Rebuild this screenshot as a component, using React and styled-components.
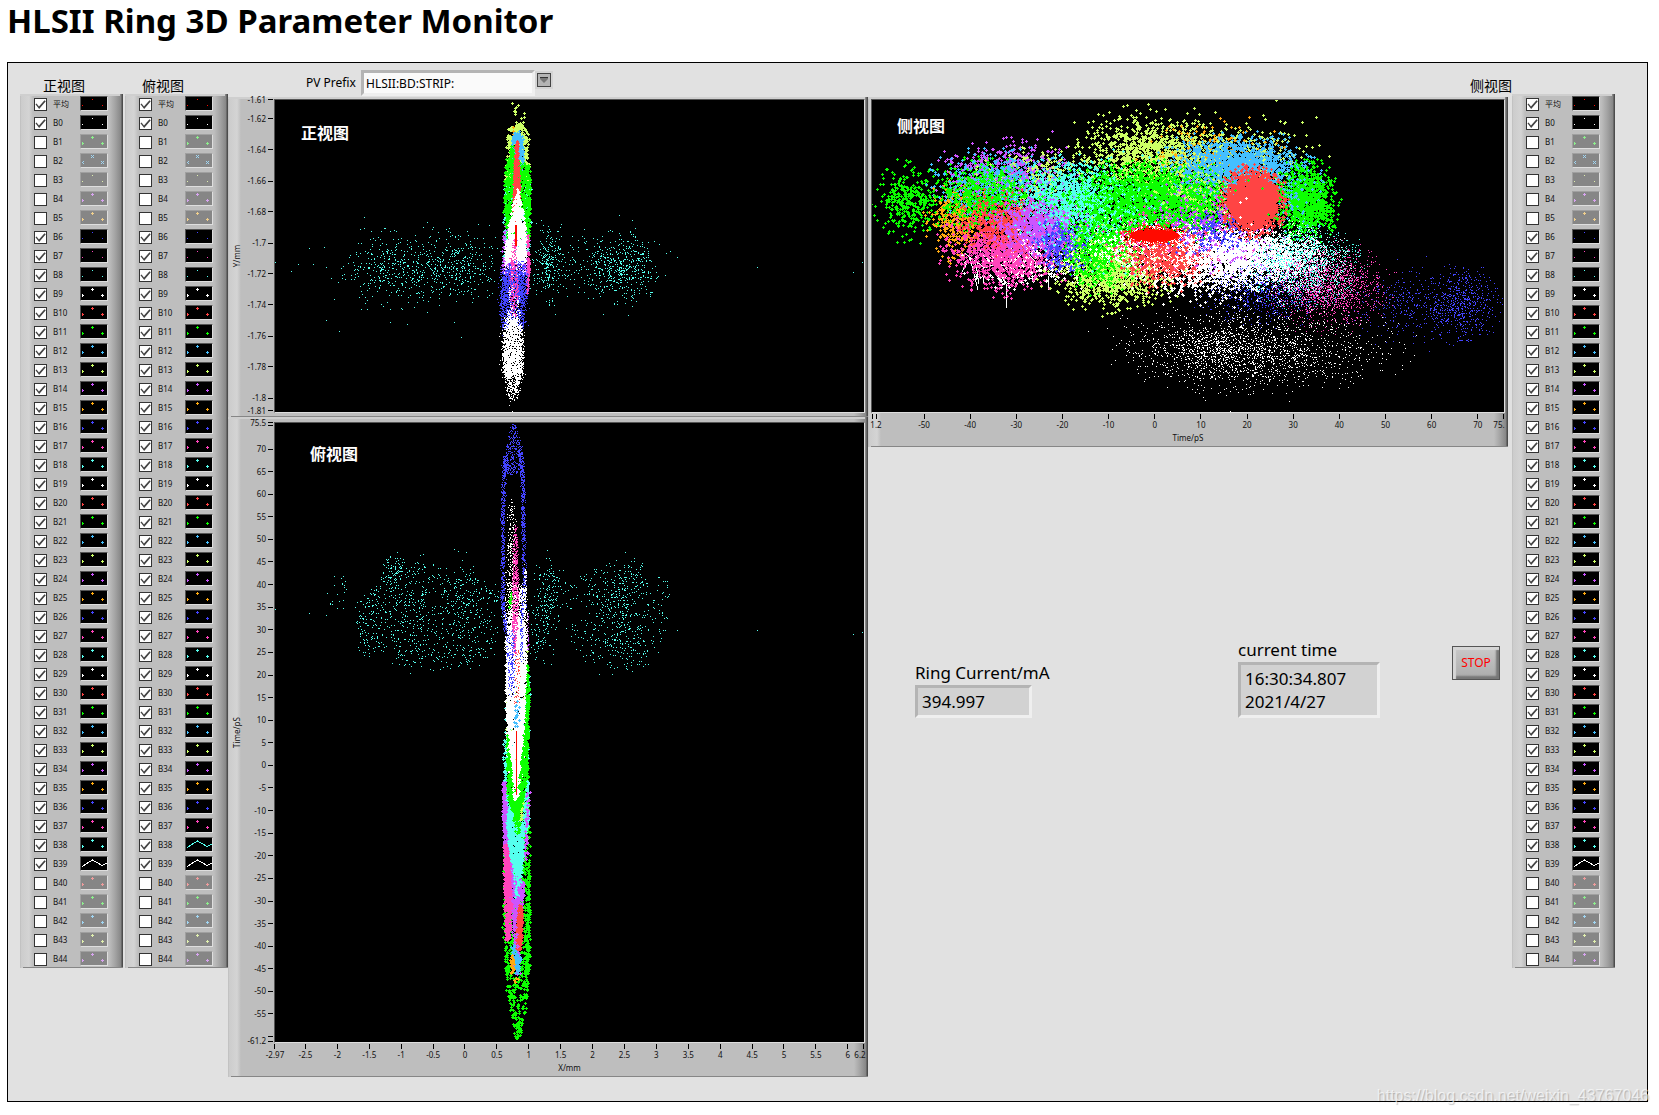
import React, { useId, useMemo } from "react";
import styled, { createGlobalStyle, css } from "styled-components";

const COLORS = {
  white: "#ffffff",
  red: "#ff4444",
  hot: "#ff0a00",
  green: "#0cff00",
  sky: "#44bfff",
  lime: "#ccff66",
  purple: "#cc55ff",
  orange: "#ffaa11",
  blue: "#4444ff",
  pink: "#ff44bb",
  cyan: "#55ffee",
};

const MUTED = {
  red: "#f09c9c",
  green: "#8cf08c",
  sky: "#a0d6f4",
  lime: "#e0f0ae",
  purple: "#d8a4f0",
  orange: "#f0cf8c",
};

const GlobalStyle = createGlobalStyle`
  *, *::before, *::after { box-sizing: border-box; }
  body {
    margin: 0;
    background: #ffffff;
    color: #000000;
    font-family: "Noto Sans", "Noto Sans CJK SC", sans-serif;
  }
`;

/* ---------- shared surfaces ---------- */

const raisedFrame = css`
  background:
    linear-gradient(#cfcfcf, #cfcfcf) top left / calc(100% - 3px) 2px no-repeat,
    linear-gradient(#868686, #868686) bottom right / calc(100% - 3px) 1px no-repeat,
    linear-gradient(
      to right,
      #b8b8b8 0,
      #cccccc 1px,
      #d4d4d4 9px,
      #bebebe 13px,
      #bebebe calc(100% - 14px),
      #a4a4a4 calc(100% - 8px),
      #868686 calc(100% - 2px),
      #4c4c4c calc(100% - 1px),
      #4c4c4c 100%
    );
`;

const sunken = css`
  border: 3px solid;
  border-color: #b4b4b4 #efefef #efefef #b4b4b4;
`;

/* ---------- page ---------- */

const Page = styled.div`
  position: relative;
  min-width: 1280px;
  padding: 0 11px 13px 7px;
`;

const Title = styled.h1`
  margin: 0;
  height: 62px;
  font-size: 33px;
  line-height: 42px;
  font-weight: 700;
`;

const FrontPanel = styled.main`
  display: flex;
  align-items: flex-start;
  padding: 0 32px 24px 12px;
  border: 1px solid #000000;
  background: #e1e1e1;
`;

const Graphs = styled.div`
  flex: 1;
  display: grid;
  grid-template-columns: minmax(0, 640fr) minmax(0, 644fr);
`;

const Column = styled.section`
  display: flex;
  flex-direction: column;
`;

const Watermark = styled.div`
  position: absolute;
  right: 10px;
  bottom: 9px;
  font: 16px/20px "Liberation Sans", Arial, sans-serif;
  color: rgba(255, 255, 255, 0.65);
  text-shadow: 1px 1px 1px rgba(0, 0, 0, 0.22);
`;

/* ---------- legends ---------- */

const LegendColumn = styled.section`
  width: 103px;
  margin-right: ${(p) => (p.$gap ? "2px" : "0")};
`;

const ViewName = styled.h2`
  margin: 0;
  height: 31px;
  padding: ${(p) => p.$pad || "0"};
  font-size: 14px;
  line-height: 46px;
  font-weight: 400;
`;

const LegendList = styled.ul`
  ${raisedFrame}
  margin: 0;
  padding: 0;
  list-style: none;
`;

const LegendRow = styled.label`
  display: grid;
  grid-template-columns: 13px 33px 28px;
  align-items: center;
  height: 19px;
  padding-left: 14px;
  font-size: 8px;
  line-height: 10px;
  color: #111111;
`;

const TickBox = styled.input.attrs({ type: "checkbox" })`
  appearance: none;
  width: 13px;
  height: 13px;
  margin: 2px 0 0;
  border: 1px solid #333333;
  background: #ffffff;

  &:checked::before {
    content: "";
    display: block;
    width: 11px;
    height: 11px;
    background: #444444;
    clip-path: polygon(4% 48%, 14% 42%, 36% 68%, 86% 12%, 98% 20%, 38% 90%);
  }
`;

const PlotName = styled.span`
  padding-left: 6px;
`;

const Swatch = styled.svg`
  display: block;
  width: 28px;
  height: 15px;
  border: 1px solid;
  border-color: ${(p) => (p.$on ? "#555555 #dedede #dedede #555555" : "#a0a0a0 #dedede #dedede #a0a0a0")};
  background: ${(p) => (p.$on ? "#000000" : "#868686")};
`;

/* ---------- controls ---------- */

const TopBar = styled.div`
  display: flex;
  align-items: flex-start;
  justify-content: ${(p) => (p.$end ? "flex-end" : "flex-start")};
  height: 34px;
  padding-left: 78px;
`;

const PrefixLabel = styled.label`
  width: 55px;
  font-size: 12px;
  line-height: 39px;
`;

const PrefixInput = styled.input`
  ${sunken}
  width: 174px;
  height: 26px;
  margin-top: 7px;
  padding: 0 2px;
  background: #fafafa;
  font: 12px/18px "Noto Sans", sans-serif;
  color: #000000;
`;

const DropButton = styled.button`
  display: flex;
  align-items: center;
  justify-content: center;
  width: 18px;
  height: 18px;
  margin-top: 8px;
  padding: 0;
  border: 2px solid #d4d4d4;
  background: #b4b4b4;

  svg {
    width: 14px;
    height: 14px;
    flex: none;
  }
`;

const Readouts = styled.div`
  display: grid;
  grid-template-columns: 323fr 214fr 48px;
  justify-items: start;
  margin: 191px 12px 0 47px;
`;

const Readout = styled.div`
  align-self: end;
  display: flex;
  flex-direction: column;
  font-size: 17px;
  line-height: 23px;

  label {
    line-height: 24px;
  }
`;

const ReadoutBox = styled.output`
  ${sunken}
  width: ${(p) => p.$width};
  padding: 2px 4px;
  background: #d2d2d2;
  white-space: pre-line;
`;

const StopButton = styled.button`
  align-self: start;
  width: 48px;
  height: 34px;
  margin-top: 8px;
  padding: 0;
  border: 1px solid #555555;
  background: linear-gradient(#c9c9c9, #ababab);
  box-shadow: inset 3px 3px 1px #d6d6d6, inset -3px -3px 2px #777777;
  font: 12px/18px "Noto Sans", sans-serif;
  color: #ff0000;
`;

/* ---------- graphs ---------- */

const GraphFrame = styled.figure`
  ${raisedFrame}
  display: grid;
  grid-template-columns: ${(p) => (p.$yAxis ? "46px" : "3px")} minmax(0, 1fr) 3px;
  grid-template-rows: ${(p) => (p.$stacked ? "5px" : "2px")} ${(p) => p.$plotHeight} ${(p) => (p.$xAxis ? "34px" : "4px")};
  margin: 0 ${(p) => (p.$xAxis && !p.$yAxis ? "4px" : "0")} 0 0;
`;

const PlotArea = styled.div`
  position: relative;
  grid-column: 2;
  grid-row: 2;
  border: 1px solid;
  border-color: #555555 #dedede #dedede #555555;
  background: #000000;
`;

const Cloud = styled.svg`
  display: block;
  width: 100%;
  height: 100%;
`;

const Caption = styled.figcaption`
  position: absolute;
  left: ${(p) => p.$left};
  top: ${(p) => p.$top};
  font-size: 16px;
  line-height: 20px;
  font-weight: 700;
  color: #ffffff;
`;

const AxisSvg = styled.svg`
  display: block;
  grid-column: ${(p) => (p.$side === "left" ? 1 : 2)};
  grid-row: ${(p) => (p.$side === "left" ? 2 : 3)};
  width: 100%;
  height: 100%;
  overflow: visible;
  font-size: 8px;
  fill: #111111;

  line {
    stroke: #000000;
    shape-rendering: crispEdges;
  }
`;

/* ---------- scatter generation ---------- */

function makeRandom(seed) {
  let s = seed;
  const next = () => {
    s = (s + 0x6d2b79f5) | 0;
    let t = Math.imul(s ^ (s >>> 15), 1 | s);
    t = (t + Math.imul(t ^ (t >>> 7), 61 | t)) ^ t;
    return ((t ^ (t >>> 14)) >>> 0) / 4294967296;
  };
  const normal = () =>
    Math.sqrt(-2 * Math.log(next() + 1e-9)) * Math.cos(2 * Math.PI * next());
  return { next, normal };
}

const dot = (x, y) => `M${x} ${y}h1v1h-1z`;
const plus = (x, y) => `M${x - 1} ${y}h3v1h-3zM${x} ${y - 1}h1v3h-1z`;

/* gaussian cloud */
const blob = (color, mark, n, x, y, sx, sy, cut = 2.7) => ({ type: "blob", color, mark, n, x, y, sx, sy, cut });
/* evenly filled ellipse */
const disc = (color, mark, n, x, y, rx, ry) => ({ type: "disc", color, mark, n, x, y, rx, ry });
/* region between a left and a right edge, given as [y, left, right] stops */
const band = (color, mark, n, stops, jitter = 1) => ({ type: "band", color, mark, n, stops, jitter });
const points = (color, mark, list) => ({ type: "points", color, mark, list });
const line = (color, d, width = 1) => ({ type: "line", color, d, width });
/* draws a group of clouds in several passes so that they show through each other */
const interleave = (rounds, layers) =>
  Array.from({ length: rounds }, () =>
    layers.map((layer) => ({ ...layer, n: Math.ceil(layer.n / rounds) }))
  ).flat();

function edgesAt(stops, y) {
  for (let i = 1; i < stops.length; i++) {
    const [y0, l0, r0] = stops[i - 1];
    const [y1, l1, r1] = stops[i];
    if (y <= y1) {
      const t = (y - y0) / (y1 - y0);
      return [l0 + (l1 - l0) * t, r0 + (r1 - r0) * t];
    }
  }
  return stops[stops.length - 1].slice(1);
}

function buildPath(layer, rnd) {
  const mark = layer.mark === "plus" ? plus : dot;
  const out = [];
  const put = (x, y) => out.push(mark(Math.round(x), Math.round(y)));
  if (layer.type === "points") {
    layer.list.forEach(([x, y]) => put(x, y));
    return out.join("");
  }
  if (layer.type === "band") {
    const { stops, jitter } = layer;
    const top = stops[0][0];
    const bottom = stops[stops.length - 1][0];
    const widest = Math.max(...stops.map((s) => s[2] - s[1]));
    let placed = 0;
    while (placed < layer.n) {
      const y = top + rnd.next() * (bottom - top);
      const [l, r] = edgesAt(stops, y);
      if (rnd.next() * widest > r - l) continue;
      put(l + rnd.next() * (r - l) + rnd.normal() * jitter * 0.6, y + rnd.normal() * jitter);
      placed++;
    }
    return out.join("");
  }
  for (let i = 0; i < layer.n; i++) {
    if (layer.type === "disc") {
      const a = rnd.next() * Math.PI * 2;
      const r = Math.sqrt(rnd.next());
      put(layer.x + Math.cos(a) * r * layer.rx, layer.y + Math.sin(a) * r * layer.ry);
    } else {
      let u = rnd.normal();
      let v = rnd.normal();
      while (u * u + v * v > layer.cut * layer.cut) {
        u = rnd.normal();
        v = rnd.normal();
      }
      put(layer.x + u * layer.sx, layer.y + v * layer.sy);
    }
  }
  return out.join("");
}

const FRONT_LAYERS = [
  blob("cyan", "dot", 330, 398, 268, 24, 18, 3.2),
  blob("cyan", "dot", 240, 462, 268, 20, 17, 3.2),
  blob("cyan", "dot", 220, 425, 268, 50, 17),
  blob("cyan", "dot", 230, 547, 264, 8, 17, 3.2),
  blob("cyan", "dot", 360, 622, 266, 17, 17, 3.2),
  blob("cyan", "dot", 220, 605, 266, 32, 18, 2.2),
  points("cyan", "dot", [[275, 262], [309, 248], [326, 320], [339, 331], [461, 337], [757, 267], [853, 272], [677, 257], [862, 262]]),
  band("lime", "plus", 16, [[102, 511, 520], [112, 514, 524], [126, 510, 526]], 1),
  band("lime", "plus", 420, [[124, 513, 524], [132, 507, 528], [180, 505, 529]], 1),
  points("orange", "plus", [[513, 127], [513, 131], [513, 134]]),
  band("sky", "plus", 300, [[132, 514, 520], [142, 511, 523], [175, 511, 523]], 1),
  band("cyan", "plus", 260, [[185, 504, 530], [255, 503, 529]], 1),
  band("purple", "plus", 160, [[225, 503, 529], [275, 502, 528]], 1),
  band("green", "plus", 900, [[158, 507, 512], [166, 505, 530], [205, 504, 530], [238, 506, 529]], 1),
  band("green", "plus", 60, [[145, 511, 513], [165, 508, 514]], 1),
  band("red", "plus", 300, [[140, 516, 518], [160, 514, 518], [185, 513, 520], [214, 513, 518], [222, 515, 517]], 0),
  band("white", "plus", 650, [[190, 517, 520], [212, 512, 522], [225, 508, 525], [262, 505, 526]], 1),
  band("white", "dot", 500, [[240, 505, 526], [275, 503, 525]], 1),
  band("pink", "plus", 60, [[235, 527, 528], [270, 528, 529], [296, 526, 527]], 0),
  band("blue", "dot", 500, [[262, 508, 524], [280, 503, 525], [300, 501, 525]], 2),
  band("blue", "dot", 1500, [[272, 502, 525], [300, 500, 525], [328, 502, 523]], 3),
  band("white", "dot", 160, [[285, 509, 518], [330, 506, 520]], 1),
  band("white", "dot", 2100, [[316, 508, 516], [335, 503, 522], [375, 504, 521]], 3),
  band("white", "dot", 380, [[368, 504, 521], [382, 505, 520], [398, 509, 516]], 2),
  band("pink", "dot", 330, [[238, 513, 515], [262, 510, 517], [295, 510, 518], [318, 512, 515]], 1),
  points("white", "dot", [[512, 411], [509, 405], [510, 401]]),
  line("hot", "M516 225V246", 2),
];

const TOP_LAYERS = [
  band("cyan", "dot", 22, [[578, 335, 350], [610, 325, 345]], 3),
  band("cyan", "dot", 200, [[575, 385, 395], [600, 360, 400], [625, 355, 385], [652, 362, 385]], 4),
  band("cyan", "dot", 600, [[562, 385, 400], [580, 385, 500], [640, 388, 500], [658, 390, 485], [667, 395, 475]], 4),
  blob("cyan", "dot", 60, 394, 568, 6, 8),
  blob("cyan", "dot", 60, 418, 610, 4, 28),
  blob("cyan", "dot", 80, 462, 600, 8, 28),
  blob("cyan", "dot", 150, 549, 595, 7, 17),
  blob("cyan", "dot", 90, 540, 630, 7, 16),
  band("cyan", "dot", 380, [[566, 620, 640], [582, 565, 668], [635, 570, 668], [652, 580, 655], [668, 590, 640]], 4),
  blob("cyan", "dot", 180, 622, 600, 13, 20),
  blob("cyan", "dot", 60, 625, 640, 10, 12),
  points("cyan", "dot", [[275, 609], [309, 613], [757, 630], [853, 634], [677, 630], [547, 550], [458, 551], [862, 632]]),
  band("green", "plus", 820, [[800, 504, 529], [930, 503, 530], [985, 506, 529], [1010, 510, 525], [1024, 513, 522]], 1),
  band("green", "plus", 44, [[1018, 512, 523], [1039, 515, 520]], 1),
  band("blue", "dot", 330, [[424, 512, 514], [436, 508, 519], [460, 503, 524], [474, 502, 524]], 1),
  band("blue", "dot", 620, [[455, 503, 508], [500, 501, 504], [600, 501, 504], [632, 504, 507]], 1),
  band("blue", "dot", 520, [[450, 518, 522], [480, 521, 524], [560, 522, 525], [610, 522, 525]], 1),
  band("white", "dot", 300, [[500, 511, 512], [520, 508, 514], [560, 506, 514], [620, 504, 514]], 2),
  band("white", "dot", 240, [[565, 524, 526], [590, 523, 526], [640, 519, 527]], 1),
  band("cyan", "plus", 120, [[670, 506, 529], [770, 504, 529]], 1),
  band("lime", "plus", 80, [[640, 526, 527], [700, 505, 528], [770, 505, 527]], 1),
  band("white", "dot", 1100, [[585, 510, 524], [620, 507, 525], [650, 505, 526]], 2),
  band("white", "plus", 2400, [[618, 512, 522], [640, 506, 525], [680, 506, 526], [755, 507, 524], [785, 510, 521]], 1),
  band("purple", "dot", 30, [[610, 527, 528], [650, 527, 529]], 0),
  band("green", "plus", 230, [[665, 527, 528], [690, 526, 529], [730, 525, 528], [780, 524, 528]], 0),
  band("green", "plus", 12, [[592, 511, 512], [608, 508, 509]], 0),
  band("pink", "dot", 620, [[525, 515, 516], [545, 513, 517], [600, 512, 518], [640, 512, 516], [655, 513, 515]], 1),
  band("blue", "dot", 110, [[590, 521, 522], [660, 520, 522]], 1),
  band("blue", "dot", 190, [[630, 506, 514], [660, 507, 515], [695, 509, 514]], 1),
  band("red", "dot", 70, [[650, 515, 520], [705, 514, 519]], 1),
  band("sky", "plus", 20, [[702, 515, 518], [728, 514, 518]], 1),
  band("cyan", "plus", 160, [[740, 504, 505], [780, 504, 507], [830, 505, 510]], 1),
  band("cyan", "plus", 160, [[780, 525, 528], [830, 521, 528]], 1),
  band("purple", "plus", 230, [[780, 502, 505], [840, 503, 508], [862, 505, 509]], 1),
  band("purple", "plus", 60, [[790, 527, 529], [860, 523, 527]], 1),
  band("green", "plus", 170, [[735, 506, 507], [775, 507, 511], [800, 508, 516]], 1),
  band("green", "plus", 200, [[735, 524, 527], [775, 520, 526], [800, 515, 524]], 1),
  band("green", "plus", 230, [[792, 509, 524], [832, 515, 519]], 1),
  band("white", "plus", 40, [[780, 511, 520], [800, 514, 517]], 1),
  band("lime", "plus", 26, [[800, 521, 524], [845, 517, 520]], 0),
  band("cyan", "plus", 760, [[812, 507, 511], [828, 507, 524], [850, 509, 523], [875, 511, 521], [898, 515, 518]], 1),
  band("green", "plus", 34, [[815, 513, 520], [838, 516, 518]], 1),
  band("purple", "plus", 420, [[862, 507, 510], [885, 508, 524], [905, 510, 522], [930, 515, 519]], 1),
  band("cyan", "plus", 50, [[865, 512, 521], [896, 515, 518]], 1),
  band("pink", "plus", 500, [[845, 504, 506], [870, 504, 510], [910, 505, 511], [940, 506, 509]], 1),
  band("red", "plus", 190, [[905, 519, 522], [925, 516, 522], [950, 515, 520]], 1),
  band("purple", "plus", 60, [[898, 512, 517], [920, 512, 516], [975, 514, 520]], 1),
  band("sky", "plus", 80, [[945, 511, 514], [960, 512, 520], [975, 516, 518]], 1),
  band("orange", "plus", 34, [[955, 511, 513], [972, 511, 513]], 1),
  points("orange", "plus", [[514, 980], [516, 978], [518, 979], [515, 982]]),
  band("green", "plus", 150, [[860, 527, 529], [950, 526, 529], [985, 523, 527]], 1),
  line("hot", "M516.5 731V795", 1),
];

const SIDE_LAYERS = [
  blob("green", "plus", 330, 909, 202, 14, 17),
  blob("orange", "plus", 420, 957, 218, 13, 18),
  blob("white", "plus", 240, 1015, 264, 26, 12, 2.2),
  line("white", "M962 272L970 258L978 290M975 258L979 284M983 262V283M998 270L1006 284V308M1020 270L1024 286M1048 276V290M964 253L985 268L1000 262"),
  ...interleave(3, [
    blob("purple", "plus", 440, 1008, 172, 34, 15),
    blob("pink", "plus", 1250, 1008, 250, 29, 18),
    blob("sky", "plus", 640, 1000, 182, 33, 14),
    blob("lime", "plus", 220, 1040, 176, 26, 14),
    blob("green", "plus", 800, 985, 193, 24, 15),
    blob("red", "plus", 620, 1001, 222, 20, 14),
  ]),
  blob("white", "plus", 1700, 1195, 252, 45, 18, 2.2),
  blob("white", "plus", 400, 1085, 245, 35, 20, 2.2),
  blob("lime", "plus", 850, 1112, 276, 28, 15),
  blob("lime", "plus", 1250, 1150, 155, 36, 18, 3),
  ...interleave(3, [
    blob("lime", "plus", 520, 1235, 164, 36, 19),
    blob("orange", "plus", 180, 1215, 152, 30, 15),
    blob("cyan", "plus", 1250, 1072, 203, 24, 19),
    blob("purple", "plus", 760, 1040, 226, 20, 14),
    blob("blue", "plus", 330, 1060, 243, 13, 13),
    blob("green", "plus", 2900, 1152, 200, 42, 17),
    blob("green", "plus", 900, 1100, 248, 17, 18),
    blob("cyan", "plus", 260, 1105, 210, 40, 26),
    blob("lime", "plus", 240, 1115, 262, 26, 18),
  ]),
  ...interleave(2, [
    blob("white", "plus", 700, 1180, 246, 40, 11, 2.3),
    blob("pink", "plus", 170, 1180, 240, 40, 14),
    blob("red", "plus", 600, 1165, 256, 22, 14),
    blob("purple", "plus", 260, 1200, 215, 24, 14),
    blob("blue", "plus", 260, 1215, 232, 20, 11),
    blob("sky", "plus", 1400, 1234, 165, 28, 13, 3),
    blob("green", "plus", 1100, 1305, 201, 14, 18, 2.6),
    blob("sky", "plus", 190, 1288, 188, 16, 22),
    blob("green", "plus", 300, 1195, 198, 16, 16),
    blob("lime", "plus", 110, 1200, 190, 20, 16),
    blob("purple", "plus", 150, 1240, 255, 26, 12),
    blob("white", "plus", 900, 1252, 256, 32, 13, 2.4),
    blob("white", "plus", 240, 1215, 280, 40, 12, 2.4),
  ]),
  blob("red", "plus", 1700, 1253, 201, 14, 15, 2.6),
  disc("red", "plus", 900, 1253, 201, 25, 26),
  points("white", "plus", [[1246, 198], [1240, 202], [1240, 217], [1251, 224], [1224, 212]]),
  points("green", "plus", [[1235, 190], [1262, 188], [1248, 180], [1268, 214]]),
  ...interleave(2, [
    blob("blue", "dot", 600, 1262, 293, 28, 14),
    blob("cyan", "dot", 1700, 1303, 264, 25, 18),
    blob("white", "dot", 1300, 1292, 263, 24, 16),
    blob("pink", "dot", 1500, 1328, 286, 27, 19),
  ]),
  blob("blue", "dot", 560, 1462, 304, 18, 19, 2.3),
  blob("blue", "dot", 340, 1412, 304, 30, 18),
  blob("white", "dot", 800, 1212, 350, 34, 18),
  blob("white", "dot", 1150, 1272, 350, 56, 19),
  blob("white", "dot", 60, 1140, 342, 22, 16),
  blob("hot", "dot", 700, 1154, 235, 16, 5, 2.2),
  disc("hot", "plus", 620, 1154, 235, 24, 5),
  points("lime", "plus", [[1148, 104], [1150, 109], [1165, 109], [1109, 112], [1199, 114], [1276, 100], [1263, 115], [1316, 117], [1133, 117], [1074, 122], [1302, 122]]),
  points("purple", "plus", [[1011, 137], [1013, 141], [1052, 131], [1037, 139]]),
  points("white", "dot", [[1230, 411], [1205, 400], [1203, 397], [1289, 401]]),
];

/* ---------- axes: [position, text, offset of the text from its tick] ---------- */

const series = (from, step, count) => Array.from({ length: count }, (_, i) => from + step * i);

const FRONT_Y = {
  size: 312,
  ticks: [
    [0, "-1.61"],
    ...series(0, 1, 10).map((i) => [19 + i * 31, String(-(162 + i * 2) / 100)]),
    [311, "-1.81"],
  ],
};

const TOP_Y = {
  size: 619,
  ticks: [
    [0, "75.5"],
    [3, ""],
    ...series(0, 1, 26).map((i) => [26 + i * 22.6, String(70 - i * 5)]),
    [613, ""],
    [618, "-61.2"],
  ],
};

const TOP_X = {
  size: 589,
  ticks: [
    [0, "-2.97"],
    ...series(0, 1, 18).map((i) => [30.5 + i * 31.9, String(-2.5 + i * 0.5)]),
    [588, "6.2", -3],
  ],
};

const SIDE_X = {
  size: 632,
  ticks: [
    [0, "1.2", 4],
    [5, ""],
    ...series(0, 1, 13).map((i) => [52 + i * 46.15, String(-50 + i * 10)]),
    [631, "75.", -4],
  ],
};

const percent = (pos, size) => `${(((pos + 1) / (size + 2)) * 100).toFixed(3)}%`;

function LeftAxis({ axis, title }) {
  return (
    <AxisSvg $side="left">
      {axis.ticks.map(([pos, text]) => (
        <g key={pos}>
          <line x1="40" x2="45" y1={percent(pos, axis.size)} y2={percent(pos, axis.size)} />
          {text && (
            <text x="38" y={percent(pos, axis.size)} dy="3" textAnchor="end">{text}</text>
          )}
        </g>
      ))}
      <svg x="12" y="50%" overflow="visible">
        <text transform="rotate(-90)" textAnchor="middle">{title}</text>
      </svg>
    </AxisSvg>
  );
}

function BottomAxis({ axis, title }) {
  return (
    <AxisSvg $side="bottom">
      {axis.ticks.map(([pos, text, offset = 0]) => (
        <g key={pos}>
          <line y1="1" y2="6" x1={percent(pos, axis.size)} x2={percent(pos, axis.size)} />
          {text && (
            <text y="15" x={percent(pos, axis.size)} dx={offset} textAnchor="middle">{text}</text>
          )}
        </g>
      ))}
      <text y="28" x="50%" textAnchor="middle">{title}</text>
    </AxisSvg>
  );
}

function Scatter({ layers, viewBox, seed, label }) {
  const paths = useMemo(() => {
    const rnd = makeRandom(seed);
    return layers.map((layer) => (layer.type === "line" ? layer.d : buildPath(layer, rnd)));
  }, [layers, seed]);
  return (
    <Cloud viewBox={viewBox} preserveAspectRatio="none" shapeRendering="crispEdges" role="img" aria-label={label}>
      {layers.map((layer, i) =>
        layer.type === "line" ? (
          <path key={i} d={paths[i]} fill="none" stroke={COLORS[layer.color]} strokeWidth={layer.width} />
        ) : (
          <path key={i} d={paths[i]} fill={COLORS[layer.color]} />
        )
      )}
    </Cloud>
  );
}

/* ---------- legend ---------- */

const CYCLE = ["red", "green", "sky", "lime", "purple", "orange", "blue", "pink", "cyan", "white"];

function legendItems(lines) {
  const bunches = Array.from({ length: 45 }, (_, i) => ({
    name: `B${i}`,
    on: i === 0 || (i > 5 && i < 40),
    color: i === 0 ? "white" : CYCLE[i % 10],
    mark: lines.includes(i) ? "line" : i === 2 ? "cross" : [0, 3, 6, 7, 8].includes(i) ? "dot" : "plus",
  }));
  return [{ name: "平均", on: true, color: "hot", mark: "dot" }, ...bunches];
}

const MARKS = {
  dot: "M11 2h1v1h-1zM1 8h1v1h-1zM21 8h1v1h-1z",
  plus: "M10 2h3v1h-3zM11 1h1v3h-1zM1 8h2v1h-2zM1 7h1v3h-1zM20 8h3v1h-3zM21 7h1v3h-1z",
  cross:
    "M10 1h1v1h-1zM12 1h1v1h-1zM11 2h1v1h-1zM10 3h1v1h-1zM12 3h1v1h-1zM1 8h1v1h-1zM2 7h1v1h-1zM2 9h1v1h-1zM20 7h1v1h-1zM22 7h1v1h-1zM21 8h1v1h-1zM20 9h1v1h-1zM22 9h1v1h-1z",
};

function Legend({ title, pad, gap, lines }) {
  const base = useId();
  return (
    <LegendColumn $gap={gap} aria-label={title || "侧视图"}>
      <ViewName as={title ? "h2" : "div"} $pad={pad}>{title}</ViewName>
      <LegendList>
        {legendItems(lines).map((item) => {
          const color = item.on ? COLORS[item.color] : MUTED[item.color];
          const id = `${base}${item.name}`;
          return (
            <li key={item.name}>
              <LegendRow htmlFor={id}>
                <TickBox id={id} defaultChecked={item.on} />
                <PlotName>{item.name}</PlotName>
                <Swatch $on={item.on} viewBox="0 0 26 13" shapeRendering="crispEdges" aria-hidden="true">
                  {item.mark === "line" ? (
                    <path d="M1 9.5L5 7L11.5 3L21 8.5L26 6" fill="none" stroke={color} />
                  ) : (
                    <path d={MARKS[item.mark]} fill={color} />
                  )}
                </Swatch>
              </LegendRow>
            </li>
          );
        })}
      </LegendList>
    </LegendColumn>
  );
}

export default function App() {
  return (
    <Page>
      <GlobalStyle />
      <Title>HLSII Ring 3D Parameter Monitor</Title>
      <FrontPanel>
        <Legend title="正视图" pad="0 0 0 23px" gap lines={[39]} />
        <Legend title="俯视图" pad="0 0 0 17px" lines={[38, 39]} />
        <Graphs>
          <Column>
            <TopBar>
              <PrefixLabel htmlFor="pv-prefix">PV Prefix</PrefixLabel>
              <PrefixInput id="pv-prefix" type="text" defaultValue="HLSII:BD:STRIP:" />
              <DropButton type="button" aria-label="Choose PV prefix">
                <svg viewBox="0 0 14 14" aria-hidden="true">
                  <rect x="0.5" y="0.5" width="13" height="13" fill="#b4b4b4" stroke="#444444" />
                  <path d="M3 4H11V6L7 10L3 6Z" fill="#777777" />
                  <path d="M3 4.5H11" stroke="#333333" />
                </svg>
              </DropButton>
            </TopBar>
            <GraphFrame $yAxis $plotHeight="314px">
              <LeftAxis axis={FRONT_Y} title="Y/mm" />
              <PlotArea>
                <Scatter layers={FRONT_LAYERS} viewBox="275 100 589 312" seed={11} label="正视图" />
                <Caption $left="26px" $top="23px">正视图</Caption>
              </PlotArea>
            </GraphFrame>
            <GraphFrame $yAxis $xAxis $stacked $plotHeight="621px">
              <LeftAxis axis={TOP_Y} title="Time/pS" />
              <PlotArea>
                <Scatter layers={TOP_LAYERS} viewBox="275 423 589 619" seed={23} label="俯视图" />
                <Caption $left="35px" $top="21px">俯视图</Caption>
              </PlotArea>
              <BottomAxis axis={TOP_X} title="X/mm" />
            </GraphFrame>
          </Column>
          <Column>
            <TopBar $end>
              <ViewName>侧视图</ViewName>
            </TopBar>
            <GraphFrame $xAxis $plotHeight="314px">
              <PlotArea>
                <Scatter layers={SIDE_LAYERS} viewBox="872 100 632 312" seed={37} label="侧视图" />
                <Caption $left="25px" $top="16px">侧视图</Caption>
              </PlotArea>
              <BottomAxis axis={SIDE_X} title="Time/pS" />
            </GraphFrame>
            <Readouts>
              <Readout>
                <label htmlFor="ring-current">Ring Current/mA</label>
                <ReadoutBox id="ring-current" $width="117px">394.997</ReadoutBox>
              </Readout>
              <Readout>
                <label htmlFor="current-time">current time</label>
                <ReadoutBox id="current-time" $width="142px">{"16:30:34.807\n2021/4/27"}</ReadoutBox>
              </Readout>
              <StopButton type="button">STOP</StopButton>
            </Readouts>
          </Column>
        </Graphs>
        <Legend lines={[39]} />
      </FrontPanel>
      <Watermark>https://blog.csdn.net/weixin_43767046</Watermark>
    </Page>
  );
}
